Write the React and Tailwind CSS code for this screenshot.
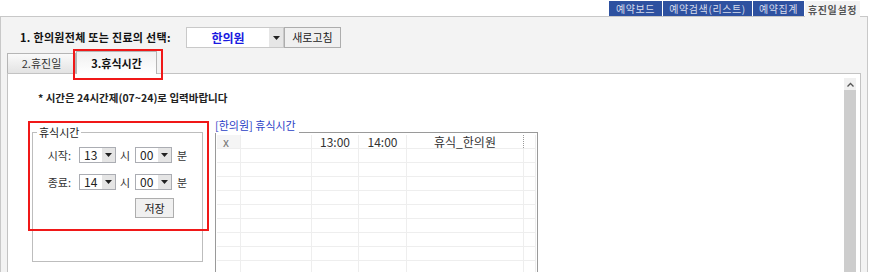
import React from "react";

const font = { fontFamily: '"Noto Sans CJK KR", "Noto Sans", sans-serif' };

function Caret() {
  return (
    <svg width="7" height="4" viewBox="0 0 7 4">
      <path d="M0 0h7L3.5 4z" fill="#222" />
    </svg>
  );
}

function Combo({ value, w = "w-[37px]" }) {
  return (
    <div className={`flex h-[16px] ${w} border border-[#abadb3] bg-white`}>
      <div className="flex-1 pl-[4px] text-[12px] leading-[14px] text-[#222]">{value}</div>
      <div className="flex w-[13px] items-center justify-center bg-[#e5e5e5]">
        <Caret />
      </div>
    </div>
  );
}

const topTabs = [
  ["예약보드", "w-[54px]"],
  ["예약검색(리스트)", "w-[90px]"],
  ["예약집계", "w-[52px]"],
];
const cols = ["w-[24px]", "w-[71px]", "w-[47px]", "w-[48px]", "w-[117px]", "flex-1"];
const header = ["x", "", "13:00", "14:00", "휴식_한의원", ""];

export default function App() {
  return (
    <div className="flex h-[272px] w-[870px] flex-col overflow-hidden bg-white" style={font}>
      {/* top tabs */}
      <div className="flex h-[20px] justify-end pr-[10px] pt-px">
        {topTabs.map(([t, w]) => (
          <div
            key={t}
            className={`flex ${w} items-center justify-center border-r border-white bg-[#2e51a0] text-[10px] tracking-[0.6px] text-[#d6dcec]`}
          >
            {t}
          </div>
        ))}
        <div className="relative z-10 -mb-px flex w-[55px] items-center justify-center bg-[#f3f3f3] text-[10px] font-bold tracking-[0.6px] text-[#555]">
          휴진일설정
        </div>
      </div>

      <div className="mr-[2px] flex flex-1 flex-col border-l border-r border-t border-[#c8c8c8] bg-[#f3f3f3] pr-[6px]">
        {/* selector row */}
        <div className="mt-[10px] flex h-[21px] items-center">
          <div className="ml-[19px] w-[166px] text-[11px] font-bold tracking-[0.3px] text-[#111]">
            1. 한의원전체 또는 진료의 선택:
          </div>
          <div className="flex h-[21px] w-[98px] border border-[#c9c9c9] bg-white">
            <div className="flex flex-1 items-center justify-center text-[12px] font-bold text-[#1a1ae0]">한의원</div>
            <div className="flex w-[14px] items-center justify-center bg-[#e6e6e6]">
              <Caret />
            </div>
          </div>
          <div className="flex h-[21px] w-[57px] items-center justify-center border border-[#adadad] bg-[#f0f0f0] text-[11px] text-[#222]">
            새로고침
          </div>
        </div>

        {/* inner tabs */}
        <div className="relative mt-[3px] flex h-[22px] items-end pl-[6px]">
          <div className="flex h-[20px] w-[69px] items-center justify-center border border-b-0 border-[#b5b5b5] bg-gradient-to-b from-[#fafafa] to-[#e3e3e3] text-[11px] text-[#333]">
            2.휴진일
          </div>
          <div className="relative z-10 -mb-px flex h-[23px] w-[81px] items-center justify-center border border-b-0 border-[#b5b5b5] bg-gradient-to-b from-[#f0f0f0] to-white text-[11px] font-bold text-[#111]">
            3.휴식시간
          </div>
          <div className="absolute left-[72px] top-[-2px] z-30 h-[31px] w-[90px] border-2 border-[#f01818]" />
        </div>

        {/* panel */}
        <div className="relative ml-[6px] flex flex-1 border border-b-0 border-[#c3c3c3] bg-white">
          <div className="flex-1">
            <div className="ml-[30px] mt-[17px] text-[10.5px] font-bold leading-[14px] text-[#222]">
              * 시간은 24시간제(07~24)로 입력바랍니다
            </div>
            <div className="mt-[13px] flex items-start">
              {/* group box */}
              <div className="relative ml-[24px] mt-[14px] h-[130px] w-[171px] border border-[#bdbdbd]">
                <div className="absolute left-[4px] top-[-8px] bg-white px-[2px] text-[11px] leading-[14px] text-[#222]">
                  휴식시간
                </div>
                <div className="mt-[14px] flex flex-col gap-[10px]">
                  {[
                    ["시작:", "13"],
                    ["종료:", "14"],
                  ].map(([l, v]) => (
                    <div key={l} className="flex items-center">
                      <div className="w-[38px] text-right text-[11px] text-[#333]">{l}</div>
                      <div className="ml-[8px]">
                        <Combo value={v} />
                      </div>
                      <div className="ml-[4px] w-[15px] text-[11px] text-[#333]">시</div>
                      <Combo value="00" />
                      <div className="ml-[5px] text-[11px] text-[#333]">분</div>
                    </div>
                  ))}
                  <div className="ml-[102px] mt-[-2px] flex h-[20px] w-[39px] items-center justify-center border border-[#adadad] bg-[#f0f0f0] text-[11px] text-[#222]">
                    저장
                  </div>
                </div>
                <div className="absolute left-[-5px] top-[-12px] z-30 h-[110px] w-[181px] border-2 border-[#f01818]" />
              </div>

              {/* grid */}
              <div className="ml-[12px] flex w-[323px] flex-col">
                <div className="flex h-[15px] items-end">
                  <div className="mb-[2px] text-[11px] leading-[12px] text-[#2b3fc6]">[한의원] 휴식시간</div>
                  <div className="ml-[3px] flex-1 border-b border-[#9a9a9a]" />
                </div>
                <div className="h-[140px] border-l border-r border-[#9a9a9a] px-px pt-[2px]">
                  {Array.from({ length: 10 }).map((_, r) => (
                    <div key={r} className="flex h-[14px] border-b border-[#eeeeee]">
                      {cols.map((c, i) => (
                        <div
                          key={i}
                          className={`${c} border-r border-[#eeeeee] text-center text-[12px] leading-[13px] ${
                            r === 0 && i === 0 ? "bg-[#f5f5f5] pl-[6px] text-left text-[10px] text-[#777]" : "text-[#333]"
                          } ${r === 0 && i === 4 ? "border-dotted border-r-[#999]" : ""}`}
                        >
                          {r === 0 ? header[i] : ""}
                        </div>
                      ))}
                    </div>
                  ))}
                </div>
              </div>
            </div>
          </div>

          {/* scrollbar */}
          <div className="mr-[4px] mt-[4px] flex w-[12px] flex-col">
            <div className="flex h-[12px] items-center justify-center bg-[#f0f0f0]">
              <svg width="7" height="5" viewBox="0 0 7 5">
                <path d="M0.5 4.5L3.5 1.5L6.5 4.5" stroke="#555" strokeWidth="1.3" fill="none" />
              </svg>
            </div>
            <div className="flex-1 bg-[#cdcdcd]" />
          </div>
        </div>
      </div>
    </div>
  );
}
